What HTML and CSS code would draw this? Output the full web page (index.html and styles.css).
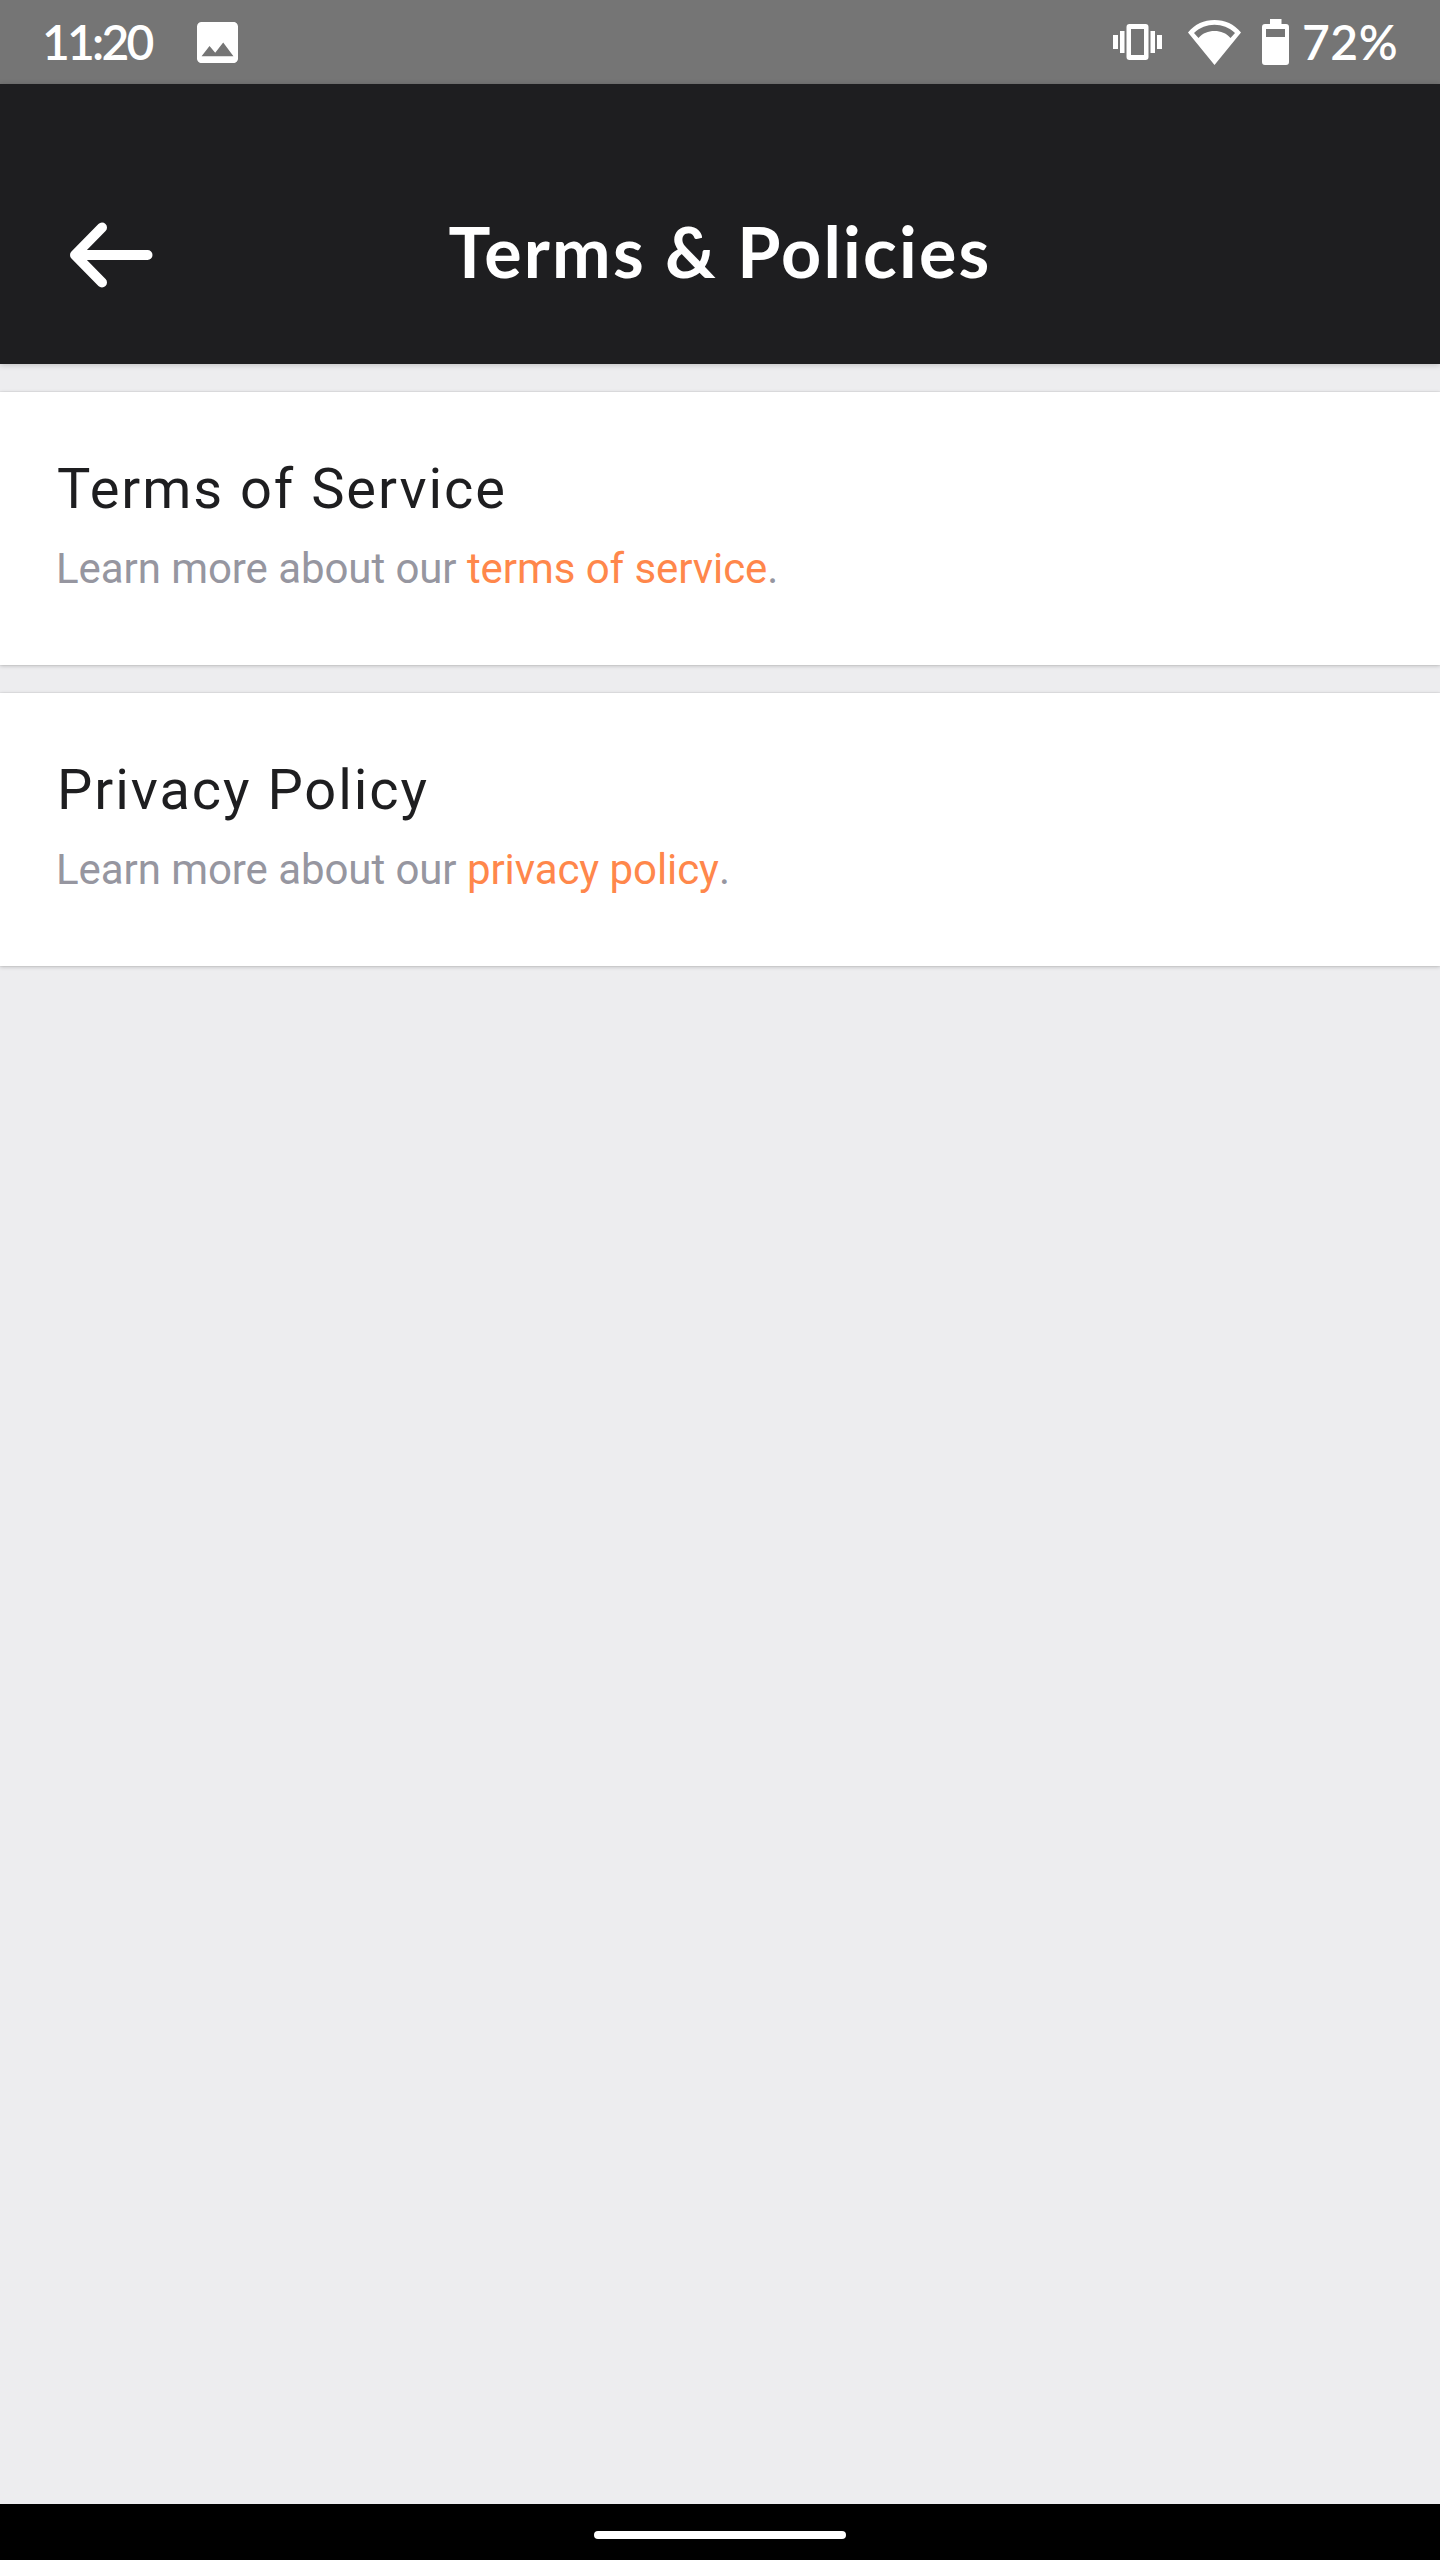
FILE: index.html
```html
<!DOCTYPE html>
<html lang="en">
<head>
    <meta charset="UTF-8">
    <meta name="viewport" content="width=device-width, initial-scale=1.0">
    <title>Terms &amp; Policies</title>
    <link rel="stylesheet" href="styles.css">
</head>
<body>
    <div class="status-bar">
        <span class="time">11:20</span>
        <svg class="icon-image" viewBox="3 3 18 18" width="41" height="41">
            <path fill="#fff" d="M21 19V5c0-1.1-.9-2-2-2H5c-1.1 0-2 .9-2 2v14c0 1.1.9 2 2 2h14c1.1 0 2-.9 2-2zM8.5 13.5l2.5 3.01L14.5 12l4.500 6H5l3.500-4.500z"/>
        </svg>
        <div class="status-right">
            <svg class="icon-vibrate" viewBox="0 0 49 36" width="49" height="36">
                <path fill="#fff" fill-rule="evenodd" d="M0 11h5v14H0zM7 7h4.500v22H7zM37.500 7H42v22h-4.500zM44 11h5v14h-5zM16.500 0h16a3 3 0 0 1 3 3v30a3 3 0 0 1-3 3h-16a3 3 0 0 1-3-3V3a3 3 0 0 1 3-3zM18 5v26h13V5z"/>
            </svg>
            <svg class="icon-wifi" viewBox="0 0 53 45" width="53" height="45">
                <path fill="#fff" fill-rule="evenodd" d="M0 12.500C7 4 16 0 26.500 0S46 4 53 12.500L26.500 45zM6 13l4.500 5C15 13 20 11 26.500 11S38 13 42.500 18l4.500-5C41 7.500 34 4.800 26.500 4.800S12 7.500 6 13z"/>
            </svg>
            <svg class="icon-battery" viewBox="0 0 27 46" width="27" height="46">
                <path fill="#fff" fill-rule="evenodd" d="M8 0h11.500v5H24a3 3 0 0 1 3 3v35a3 3 0 0 1-3 3H3a3 3 0 0 1-3-3V8a3 3 0 0 1 3-3h5zM4 10v8h19v-8z"/>
            </svg>
            <span class="battery-level">72%</span>
        </div>
    </div>

    <div class="header">
        <svg class="back" viewBox="0 0 84 66" width="84" height="66">
            <path fill="none" stroke="#fff" stroke-width="10" stroke-linecap="round" stroke-linejoin="round" d="M32 5.500L5 33l27 27.500M6 33h71.500"/>
        </svg>
        <h1>Terms &amp; Policies</h1>
    </div>

    <div class="content">
        <div class="card">
            <h2>Terms of Service</h2>
            <p>Learn more about our <a>terms of service</a>.</p>
        </div>
        <div class="card">
            <h2>Privacy Policy</h2>
            <p>Learn more about our <a>privacy policy</a>.</p>
        </div>
    </div>

    <div class="nav-bar">
        <div class="nav-pill"></div>
    </div>
</body>
</html>
```

FILE: styles.css
```css
* {
    box-sizing: border-box;
}

body {
    display: flex;
    flex-direction: column;
    height: 2560px;
    margin: 0;
    background-color: #ededef;
    font-family: Roboto, sans-serif;
}

.status-bar {
    display: flex;
    align-items: center;
    height: 84px;
    padding: 0 42px;
    background: #757575;
    color: white;
    font-family: Lato, sans-serif;
    font-size: 48px;
    font-weight: 600;
    line-height: 86px;
}

.time {
    width: 155px;
    letter-spacing: -2.8px;
}

.status-right {
    display: flex;
    align-items: center;
    margin-left: auto;
}

.icon-wifi {
    margin-left: 26px;
    margin-right: 21px;
}

.battery-level {
    width: 96px;
    margin-left: 13px;
    letter-spacing: 0.5px;
}

.header {
    display: grid;
    grid-template-columns: 84px 1fr 84px;
    align-items: center;
    height: 280px;
    padding: 62px 70px 0;
    background: #1e1e20;
    box-shadow: 0 1px 6px rgba(0, 0, 0, 0.2);
}

.header h1 {
    margin: 0;
    padding-bottom: 8px;
    color: white;
    font-family: Lato, sans-serif;
    font-size: 70px;
    font-weight: bold;
    line-height: 84px;
    letter-spacing: 2.2px;
    text-align: center;
}

.content {
    display: flex;
    flex: 1;
    flex-direction: column;
    gap: 28px;
    padding-top: 28px;
}

.card {
    height: 273px;
    padding: 64px 56px 0;
    background: white;
    box-shadow: 0 0 1px rgba(0, 0, 0, 0.2), 0 1px 4px rgba(0, 0, 0, 0.2);
}

.card h2 {
    margin: 0;
    padding-left: 1px;
    color: #1e1e20;
    font-size: 56px;
    font-weight: normal;
    line-height: 66px;
    letter-spacing: 1.95px;
}

.card p {
    margin: 22px 0 0;
    color: #9696a0;
    font-size: 42px;
    line-height: 50px;
    letter-spacing: -0.07px;
}

.card a {
    display: inline-block;
    color: #ff874b;
}

.nav-bar {
    display: flex;
    justify-content: center;
    height: 56px;
    padding-top: 27px;
    background: black;
}

.nav-pill {
    width: 252px;
    height: 8px;
    border-radius: 4px;
    background: white;
}
```
